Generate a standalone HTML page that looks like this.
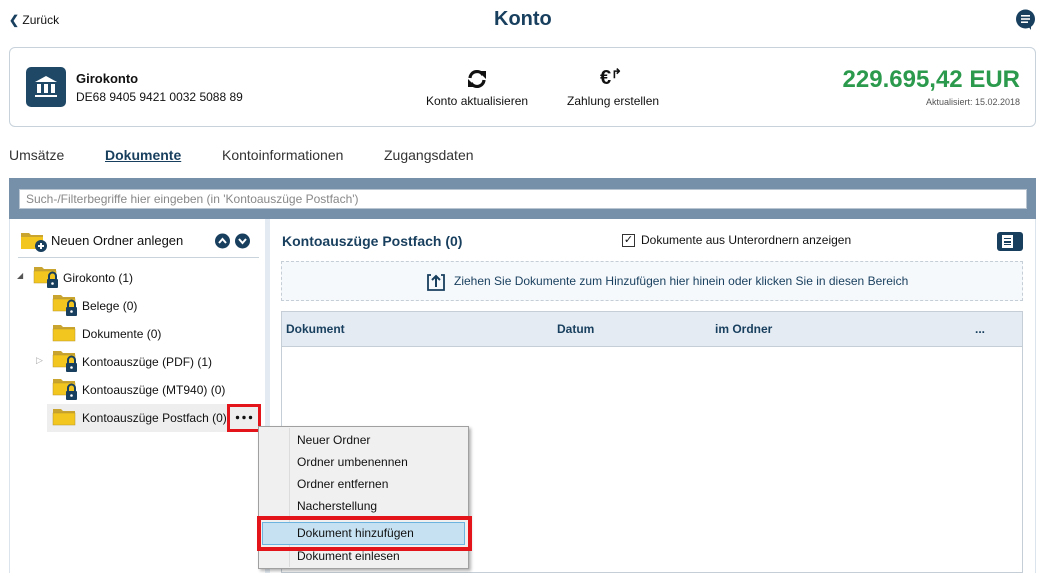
<!DOCTYPE html>
<html><head><meta charset="utf-8"><style>
*{box-sizing:border-box;margin:0;padding:0}
body{width:1041px;height:573px;overflow:hidden;background:#fff;font-family:"Liberation Sans",sans-serif;color:#111;position:relative;font-size:13px}
.a{position:absolute;white-space:nowrap}
.dk{color:#183f5e}
.t{font-size:12px}
</style></head><body>
<div class="a" style="left:9px;top:13px;font-size:12px"><span style="font-weight:bold;color:#183f5e">&#10094;</span> Zurück</div>
<div class="a dk" style="left:494px;top:8px;font-size:20px;font-weight:bold">Konto</div>
<svg class="a" style="left:1015px;top:9px" width="21" height="22" viewBox="0 0 21 22"><circle cx="10.5" cy="10" r="9.5" fill="#183f5e"/><path d="M13 17 L16 21 L16 15Z" fill="#183f5e"/><rect x="6" y="6" width="9" height="1.6" fill="#fff"/><rect x="6" y="9.2" width="9" height="1.6" fill="#fff"/><rect x="6" y="12.4" width="7" height="1.6" fill="#fff"/></svg>

<div class="a" style="left:9px;top:47px;width:1027px;height:80px;border:1px solid #c8d2db;border-radius:6px"></div>
<div class="a" style="left:26px;top:67px;width:40px;height:40px;background:#1e4866;border-radius:5px"></div>
<svg class="a" style="left:26px;top:67px" width="40" height="40"><path d="M9 15 L20 9 L31 15Z" fill="#fff"/><rect x="11" y="17" width="4" height="9" fill="#fff"/><rect x="18" y="17" width="4" height="9" fill="#fff"/><rect x="25" y="17" width="4" height="9" fill="#fff"/><rect x="9" y="28" width="22" height="2" fill="#fff"/></svg>
<div class="a" style="left:76px;top:71px;font-size:13px;font-weight:bold">Girokonto</div>
<div class="a" style="left:76px;top:90px;font-size:12px">DE68 9405 9421 0032 5088 89</div>
<svg class="a" style="left:466px;top:68px" width="22" height="22" viewBox="0 0 22 22"><path d="M4 10 A7 7 0 0 1 17 7" stroke="#111" stroke-width="3.2" fill="none"/><path d="M12 3 L20 3 L20 11Z" fill="#111"/><path d="M18 12 A7 7 0 0 1 5 15" stroke="#111" stroke-width="3.2" fill="none"/><path d="M10 19 L2 19 L2 11Z" fill="#111"/></svg>
<div class="a" style="left:426px;top:94px;font-size:12px">Konto aktualisieren</div>
<div class="a" style="left:600px;top:66px;font-size:20px;font-weight:bold">€<span style="font-size:13px;vertical-align:6px">↱</span></div>
<div class="a" style="left:567px;top:94px;font-size:12px">Zahlung erstellen</div>
<div class="a" style="right:21px;top:66px;font-size:24px;font-weight:bold;color:#2b9a4c">229.695,42 EUR</div>
<div class="a" style="right:21px;top:97px;font-size:9px;color:#555">Aktualisiert: 15.02.2018</div>

<div class="a" style="left:9px;top:147px;font-size:14px;color:#333">Umsätze</div>
<div class="a dk" style="left:105px;top:147px;font-size:14px;font-weight:bold;text-decoration:underline">Dokumente</div>
<div class="a" style="left:222px;top:147px;font-size:14px;color:#333">Kontoinformationen</div>
<div class="a" style="left:384px;top:147px;font-size:14px;color:#333">Zugangsdaten</div>

<div class="a" style="left:9px;top:178px;width:1027px;height:41px;background:#7790aa"></div>
<div class="a" style="left:19px;top:189px;width:1008px;height:20px;background:#fff;border:1px solid #b9c5d0;font-size:12px;color:#888;padding:2px 6px">Such-/Filterbegriffe hier eingeben (in 'Kontoauszüge Postfach')</div>
<div class="a" style="left:9px;top:219px;width:1px;height:354px;background:#dbe4ed"></div>
<div class="a" style="left:1035px;top:219px;width:1px;height:354px;background:#dbe4ed"></div>
<div class="a" style="left:265px;top:219px;width:5px;height:354px;background:#e3eaf2"></div>

<svg class="a" style="left:20px;top:230px" width="28" height="22"><path d="M1 3h8l2 2h12v14H1Z" fill="#c9a530"/><rect x="1" y="7" width="22" height="12" fill="#f2c61f"/><circle cx="21" cy="16" r="6" fill="#183f5e"/><path d="M18 16h6M21 13v6" stroke="#fff" stroke-width="2"/></svg>
<div class="a" style="left:51px;top:233px;font-size:13px">Neuen Ordner anlegen</div>
<svg class="a" style="left:215px;top:233px" width="36" height="16"><circle cx="7.5" cy="8" r="7.5" fill="#183f5e"/><path d="M4 10 L7.5 6 L11 10" stroke="#fff" stroke-width="2" fill="none"/><circle cx="27.5" cy="8" r="7.5" fill="#183f5e"/><path d="M24 6 L27.5 10 L31 6" stroke="#fff" stroke-width="2" fill="none"/></svg>
<div class="a" style="left:18px;top:257px;width:241px;height:1px;background:#c9d3dc"></div>

<div class="a" style="left:17px;top:271px;font-size:8px;color:#555">◢</div>
<div class="a" style="left:47px;top:404px;width:211px;height:28px;background:#eeeeee"></div>
<svg width="0" height="0" style="position:absolute"><defs><g id="fl"><path d="M1 1h8l2 2h12v14H1Z" fill="#c9a530"/><rect x="1" y="5" width="22" height="12" fill="#f2c61f" stroke="#b8952a" stroke-width=".5"/></g><g id="lk"><path d="M16 13v-3a3.5 3.5 0 0 1 7 0v3" stroke="#183f5e" stroke-width="2" fill="none"/><rect x="14" y="13" width="11" height="9" rx="1" fill="#183f5e"/><circle cx="19.5" cy="17.5" r="1.3" fill="#fff"/></g></defs></svg>
<svg class="a" style="left:33px;top:266px" width="28" height="24"><use href="#fl"/><use href="#lk"/></svg>
<div class="a t" style="left:63px;top:271px">Girokonto (1)</div>
<svg class="a" style="left:52px;top:294px" width="28" height="24"><use href="#fl"/><use href="#lk"/></svg>
<div class="a t" style="left:82px;top:299px">Belege (0)</div>
<svg class="a" style="left:52px;top:324px" width="28" height="24"><use href="#fl"/></svg>
<div class="a t" style="left:82px;top:327px">Dokumente (0)</div>
<div class="a" style="left:36px;top:355px;font-size:9px;color:#aaa">▷</div>
<svg class="a" style="left:52px;top:350px" width="28" height="24"><use href="#fl"/><use href="#lk"/></svg>
<div class="a t" style="left:82px;top:355px">Kontoauszüge (PDF) (1)</div>
<svg class="a" style="left:52px;top:378px" width="28" height="24"><use href="#fl"/><use href="#lk"/></svg>
<div class="a t" style="left:82px;top:383px">Kontoauszüge (MT940) (0)</div>
<svg class="a" style="left:52px;top:408px" width="28" height="24"><use href="#fl"/></svg>
<div class="a t" style="left:82px;top:411px">Kontoauszüge Postfach (0)</div>
<div class="a" style="left:227px;top:404px;width:34px;height:28px;border:3px solid #e4141b"></div>
<svg class="a" style="left:235px;top:415px" width="18" height="5"><circle cx="2.5" cy="2.5" r="1.7" fill="#111"/><circle cx="9" cy="2.5" r="1.7" fill="#111"/><circle cx="15.5" cy="2.5" r="1.7" fill="#111"/></svg>

<div class="a dk" style="left:282px;top:233px;font-size:14px;font-weight:bold">Kontoauszüge Postfach (0)</div>
<div class="a" style="left:622px;top:234px;width:13px;height:13px;border:1px solid #333;font-size:11px;line-height:11px;text-align:center">✓</div>
<div class="a" style="left:641px;top:233px;font-size:12px">Dokumente aus Unterordnern anzeigen</div>
<div class="a" style="left:997px;top:232px;width:26px;height:19px;background:#183f5e;border-radius:3px"></div>
<div class="a" style="left:1002px;top:235px;width:11px;height:13px;background:#fff"></div>
<div class="a" style="left:1004px;top:238px;width:7px;height:7px;border-top:1.5px solid #183f5e;border-bottom:1.5px solid #183f5e"></div>
<div class="a" style="left:1004px;top:241px;width:7px;height:1.5px;background:#183f5e"></div>

<div class="a" style="left:281px;top:261px;width:742px;height:40px;background:#f6f9fc;border:1px dashed #c5ced6"></div>
<svg class="a" style="left:427px;top:271px" width="18" height="20"><path d="M4 4H1v15h16V4h-3" stroke="#183f5e" stroke-width="1.8" fill="none"/><path d="M9 16V6M5 9l4-4 4 4" stroke="#183f5e" stroke-width="2" fill="none"/></svg>
<div class="a dk" style="left:454px;top:274px;font-size:12px">Ziehen Sie Dokumente zum Hinzufügen hier hinein oder klicken Sie in diesen Bereich</div>

<div class="a" style="left:281px;top:311px;width:742px;height:262px;border:1px solid #c5ced6"></div>
<div class="a" style="left:281px;top:311px;width:742px;height:36px;background:#e4ebf3;border:1px solid #c5ced6"></div>
<div class="a dk" style="left:286px;top:322px;font-size:12px;font-weight:bold">Dokument</div>
<div class="a dk" style="left:557px;top:322px;font-size:12px;font-weight:bold">Datum</div>
<div class="a dk" style="left:715px;top:322px;font-size:12px;font-weight:bold">im Ordner</div>
<div class="a dk" style="left:975px;top:322px;font-size:12px;font-weight:bold">...</div>

<div class="a" style="left:258px;top:426px;width:211px;height:143px;background:#f0f0f0;border:1px solid #a0a0a0;box-shadow:2px 2px 3px rgba(0,0,0,.3)"></div>
<div class="a" style="left:289px;top:428px;width:1px;height:139px;background:#dcdcdc"></div>
<div class="a" style="left:297px;top:433px;font-size:12px">Neuer Ordner</div>
<div class="a" style="left:297px;top:455px;font-size:12px">Ordner umbenennen</div>
<div class="a" style="left:297px;top:477px;font-size:12px">Ordner entfernen</div>
<div class="a" style="left:297px;top:499px;font-size:12px">Nacherstellung</div>
<div class="a" style="left:262px;top:522px;width:203px;height:23px;background:#c6e1f1;border:1px solid #6cb3e0"></div>
<div class="a" style="left:257px;top:516px;width:215px;height:35px;border:4px solid #e4141b"></div>
<div class="a" style="left:297px;top:526px;font-size:12px">Dokument hinzufügen</div>
<div class="a" style="left:297px;top:549px;font-size:12px">Dokument einlesen</div>
</body></html>
